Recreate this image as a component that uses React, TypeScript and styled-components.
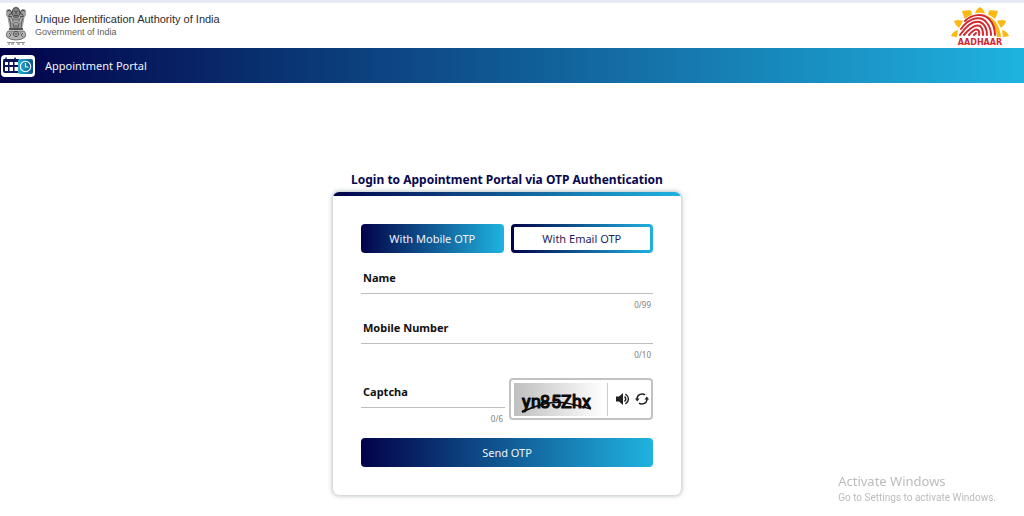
import React, { useState } from "react";
import styled, { createGlobalStyle, css } from "styled-components";

const gradient = "linear-gradient(90deg, #020249 0%, #1fb3e0 100%)";

const GlobalStyle = createGlobalStyle`
  * { box-sizing: border-box; }
  body {
    margin: 0;
    background: #fff;
    font-family: "Noto Sans", "Open Sans", sans-serif;
    color: #111;
  }
  button, input { font-family: inherit; }
`;

const Page = styled.div`
  min-height: 100vh;
  border-top: 3px solid #e6eaf5;
`;

const Header = styled.header`
  display: flex;
  align-items: center;
  justify-content: space-between;
  height: 45px;
  padding: 0 14px 0 4px;
`;

const Brand = styled.div`
  display: flex;
  align-items: center;
  gap: 7px;
`;

const BrandText = styled.div`
  font-family: "Liberation Sans", Arial, sans-serif;
`;

const BrandName = styled.div`
  font-size: 11px;
  line-height: 13px;
  color: #2c2c2c;
`;

const BrandSub = styled.div`
  font-size: 9px;
  line-height: 13px;
  color: #606060;
`;

const PortalBar = styled.nav`
  display: flex;
  align-items: center;
  gap: 10px;
  height: 35px;
  padding-left: 1px;
  background: ${gradient};
  color: #f0f4fa;
  font-size: 11px;
  line-height: 20px;
`;

const Main = styled.main`
  display: flex;
  flex-direction: column;
  align-items: center;
  padding: 88px 10px 20px 0;
`;

const Title = styled.h1`
  margin: 0;
  font-size: 12px;
  line-height: 18px;
  font-weight: 700;
  color: #06064f;
`;

const Card = styled.form`
  width: 348px;
  max-width: 100%;
  margin-top: 3px;
  border-radius: 6px;
  overflow: hidden;
  background: #fff;
  box-shadow: 0 0 4px 1px rgba(70, 90, 100, 0.36);
  &::before {
    content: "";
    display: block;
    height: 4px;
    background: ${gradient};
  }
`;

const CardBody = styled.div`
  padding: 28px;
`;

const ButtonRow = styled.div`
  display: grid;
  grid-template-columns: 1fr 1fr;
  gap: 7px;
  margin-bottom: 12px;
`;

const Button = styled.button<{ $outline?: boolean }>`
  width: 100%;
  height: 29px;
  padding: 0;
  border: 3px solid transparent;
  border-radius: 4px;
  font-size: 11px;
  line-height: 20px;
  color: #f0f4fa;
  background: ${gradient} border-box;
  cursor: pointer;
  ${(p) =>
    p.$outline &&
    css`
      color: #1d1d60;
      background: linear-gradient(#fff, #fff) padding-box, ${gradient} border-box;
    `}
`;

const Field = styled.div`
  display: grid;
  grid-template-rows: 29px 21px;
`;

const FieldLabel = styled.label`
  grid-area: 1 / 1;
  align-self: center;
  padding: 0 0 3px 2px;
  font-size: 11px;
  line-height: 16px;
  font-weight: 700;
`;

const FieldInput = styled.input`
  grid-area: 1 / 1;
  width: 100%;
  min-width: 0;
  padding: 0 2px;
  border: 0;
  border-bottom: 1px solid #bdbdbd;
  outline: 0;
  background: transparent;
  font-size: 11px;
`;

const Counter = styled.span`
  grid-area: 2 / 1;
  justify-self: end;
  padding: 4px 2px 0 0;
  font-size: 8px;
  line-height: 14px;
  color: #808080;
`;

const CaptchaRow = styled.div`
  display: grid;
  grid-template-columns: 1fr 144px;
  gap: 4px;
  align-items: end;
  margin: 13px 0 9px;
`;

const CaptchaBox = styled.div`
  display: flex;
  align-items: center;
  height: 42px;
  margin-bottom: 9px;
  padding-left: 3px;
  border: 2px solid #c2c2c2;
  border-radius: 4px;
`;

const CaptchaTools = styled.div`
  display: flex;
  align-items: center;
  gap: 5px;
  height: 33px;
  margin-left: 3px;
  padding-left: 8px;
  border-left: 1px solid #ccc;
`;

const IconButton = styled.button`
  display: flex;
  padding: 0;
  border: 0;
  background: none;
  cursor: pointer;
`;

const Watermark = styled.aside`
  position: fixed;
  right: 28px;
  bottom: 11px;
  color: #bcbcbc;
  pointer-events: none;
`;

const WatermarkTitle = styled.div`
  font-size: 13px;
  line-height: 18px;
`;

const WatermarkText = styled.div`
  font-family: Roboto, sans-serif;
  font-size: 10px;
  line-height: 15px;
`;

function Emblem() {
  return (
    <svg width="24" height="40" viewBox="0 0 24 40" role="img" aria-label="State Emblem of India">
      <path d="M9 2Q12-1 15 2L16 5Q20 1 22 5L22 9Q20 11 20 15L18 23H6L4 15Q4 11 2 9V5Q4 1 8 5Z" fill="#a0a0a0" />
      <path d="M9 3Q12 0 15 3L16 8Q14 12 12 12Q10 12 8 8Z" fill="#888" stroke="#444" strokeWidth=".8" />
      <path d="M10 5H11M13 5H14M12 5V8M10 9Q12 11 14 9M3 5L6 4L8 7L5 9M21 5L18 4L16 7L19 9M4 10L8 11M20 10L16 11" fill="none" stroke="#333" strokeWidth=".9" />
      <path d="M5 12Q7 15 7 23M9 12Q8 16 10 22M15 12Q16 16 14 22M19 12Q17 15 17 23M11 13V22M13 13V22" fill="none" stroke="#555" strokeWidth=".9" />
      <path d="M7 14L9 17M17 14L15 17M10 15H14M10 18H14" stroke="#ddd" strokeWidth=".7" />
      <path d="M5 22H19V24H5Z" fill="#555" />
      <path d="M4 25Q1 28 3 31Q6 34 12 34Q18 34 21 31Q23 28 20 25Z" fill="#b4b4b4" stroke="#666" strokeWidth=".9" />
      <circle cx="12" cy="28" r="2.6" fill="#ddd" stroke="#444" strokeWidth=".9" />
      <path d="M12 25V31M9 28H15M5 27L7 29L5 31M19 27L17 29L19 31M7 27H8M16 27H17" stroke="#444" strokeWidth=".8" fill="none" />
      <path d="M3 36.500H11M12 36.500H21" stroke="#777" strokeWidth=".8" />
      <path d="M4 38H6M7 38H10M13 38H16M18 38H20" stroke="#777" strokeWidth="1.2" />
    </svg>
  );
}

function AadhaarLogo() {
  return (
    <svg width="60" height="42" viewBox="0 -1 60 42" role="img" aria-label="Aadhaar">
      <g fill="#fbb914">
        <path d="M25 7.500Q26 3 30 1Q34 3 35 7.500Q30 6 25 7.500Z" />
        <path d="M12 5L20 4Q22 6 22 8.500Q18 10 15 13Q13 9 12 5Z" />
        <path d="M48 5L40 4Q38 6 38 8.500Q42 10 45 13Q47 9 48 5Z" />
        <path d="M4 15Q8 13 13 15L9 22Q5 19 4 15Z" />
        <path d="M56 15Q52 13 47 15L51 22Q55 19 56 15Z" />
        <path d="M1 30Q3 25 8 24L7 31Q4 31 1 30Z" />
        <path d="M59 30Q57 25 52 24L53 31Q56 31 59 30Z" />
        <path d="M35 9Q49 13 51 31L47 31Q46 18 35 9Z" />
      </g>
      <g fill="none" stroke="#d32a30" strokeWidth="2" strokeLinecap="round">
        <path d="M15 15C22 8 33 7 39 13Q45 19 45 29" />
        <path d="M11 23C20 10 32 10 37 17Q41 22 41 29" />
        <path d="M10 29C16 20 22 14 30 16Q37 19 37 29" />
        <path d="M14 29C20 22 25 18 30 20Q33 22 33 29" />
        <path d="M19 29Q25 22 28 24Q30 26 29 29" />
        <path d="M24 29L26 27" />
      </g>
      <text x="30" y="39" textAnchor="middle" fontFamily="DejaVu Sans, sans-serif" fontWeight="700" fontSize="8" fill="#d32a30">
        AADHAAR
      </text>
    </svg>
  );
}

function PortalIcon() {
  return (
    <svg width="34" height="22" viewBox="0 0 34 22" aria-hidden="true">
      <defs>
        <linearGradient id="clockFill">
          <stop offset="0" stopColor="#22b4df" />
          <stop offset="1" stopColor="#085287" />
        </linearGradient>
      </defs>
      <rect width="34" height="22" rx="4" fill="#fff" />
      <path d="M3 4H18V18H4Q2 18 2 16V6Q2 4 3 4Z" fill="#0a1555" />
      <path d="M5 2.500V4M14 2.500V4" stroke="#0a1555" strokeWidth="1.500" />
      <path d="M4 7H7V10H4ZM8.500 7H12V10H8.500ZM13.500 7H17V10H13.500ZM4 12H7V16H4ZM8.500 12H12V16H8.500ZM13.500 12H17V16H13.500Z" fill="#fff" />
      <rect x="17" y="4" width="15" height="15" rx="2" fill="url(#clockFill)" />
      <circle cx="24.500" cy="11.500" r="5.200" fill="none" stroke="#fff" strokeWidth="1.100" />
      <path d="M24.500 8V12H27.500" fill="none" stroke="#fff" strokeWidth="1.200" />
    </svg>
  );
}

function CaptchaImage() {
  return (
    <svg width="90" height="33" viewBox="0 0 90 33" role="img" aria-label="Captcha image">
      <defs>
        <linearGradient id="captchaShade">
          <stop offset="0" stopColor="#bfbfbf" />
          <stop offset="1" stopColor="#fff" />
        </linearGradient>
      </defs>
      <rect width="90" height="33" fill="url(#captchaShade)" />
      <text x="8 17 26 37 47 58 68" y="25" fill="#0c0c0c" stroke="#0c0c0c" strokeWidth="1.200" strokeLinejoin="round" fontFamily="Roboto, Liberation Sans, sans-serif" fontSize="18">
        yn85Zhx
      </text>
      <path d="M8 29Q18 24 30 21T52 20T77 26" fill="none" stroke="#0c0c0c" strokeWidth="1.500" />
    </svg>
  );
}

function SpeakerIcon() {
  return (
    <svg width="14" height="14" viewBox="0 0 14 14" aria-hidden="true">
      <path d="M0 4.500H3L7 1V13L3 9.500H0Z" fill="#222" />
      <path d="M8.500 4.500Q11 7 8.500 9.500M9.500 2Q15.500 7 9.500 12" fill="none" stroke="#222" strokeWidth="1.500" />
    </svg>
  );
}

function RefreshIcon() {
  return (
    <svg width="14" height="14" viewBox="0 0 14 14" aria-hidden="true">
      <path d="M2 7.500Q2 2 7.500 2Q9 2 10 3M12 6.500Q12 12 6.500 12Q5 12 4 11" fill="none" stroke="#222" strokeWidth="1.500" />
      <path d="M0 6.500H4.500L2.200 9.500ZM9.500 7.500H14L11.800 4.500Z" fill="#222" />
    </svg>
  );
}

interface TextFieldProps {
  id: string;
  label: string;
  max: number;
}

function TextField({ id, label, max }: TextFieldProps) {
  const [value, setValue] = useState("");
  return (
    <Field>
      <FieldLabel htmlFor={id} hidden={value.length > 0}>
        {label}
      </FieldLabel>
      <FieldInput id={id} value={value} maxLength={max} autoComplete="off" onChange={(e) => setValue(e.target.value)} />
      <Counter>
        {value.length}/{max}
      </Counter>
    </Field>
  );
}

export default function App() {
  return (
    <>
      <GlobalStyle />
      <Page>
        <Header>
          <Brand>
            <Emblem />
            <BrandText>
              <BrandName>Unique Identification Authority of India</BrandName>
              <BrandSub>Government of India</BrandSub>
            </BrandText>
          </Brand>
          <AadhaarLogo />
        </Header>
        <PortalBar>
          <PortalIcon />
          <span>Appointment Portal</span>
        </PortalBar>
        <Main>
          <Title>Login to Appointment Portal via OTP Authentication</Title>
          <Card onSubmit={(e) => e.preventDefault()}>
            <CardBody>
              <ButtonRow>
                <Button type="button">With Mobile OTP</Button>
                <Button type="button" $outline>
                  With Email OTP
                </Button>
              </ButtonRow>
              <TextField id="name" label="Name" max={99} />
              <TextField id="mobile" label="Mobile Number" max={10} />
              <CaptchaRow>
                <TextField id="captcha" label="Captcha" max={6} />
                <CaptchaBox>
                  <CaptchaImage />
                  <CaptchaTools>
                    <IconButton type="button" aria-label="Play captcha audio">
                      <SpeakerIcon />
                    </IconButton>
                    <IconButton type="button" aria-label="Refresh captcha">
                      <RefreshIcon />
                    </IconButton>
                  </CaptchaTools>
                </CaptchaBox>
              </CaptchaRow>
              <Button type="submit">Send OTP</Button>
            </CardBody>
          </Card>
        </Main>
        <Watermark>
          <WatermarkTitle>Activate Windows</WatermarkTitle>
          <WatermarkText>Go to Settings to activate Windows.</WatermarkText>
        </Watermark>
      </Page>
    </>
  );
}
